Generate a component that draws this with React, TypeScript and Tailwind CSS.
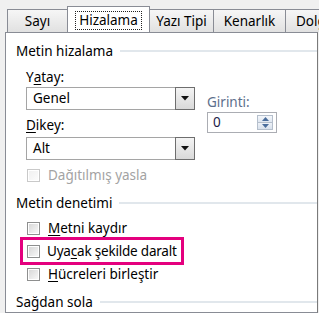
import React from "react";

const font = { fontFamily: '"Noto Sans", "Open Sans", sans-serif' };

function Tab({ label, w, active }: { label: string; w: string; active?: boolean }) {
  if (active) {
    return (
      <div
        className={`${w} h-[27px] -mb-px -ml-px relative z-10 bg-white border border-b-0 border-[#898c95] flex items-center justify-center shrink-0`}
      >
        <span className="border border-dotted border-[#222] px-[3px] leading-[17px] text-[13.5px] text-black">
          {label}
        </span>
      </div>
    );
  }
  return (
    <div
      className={`${w} h-[23px] -ml-px shrink-0 border border-b-0 border-[#898c95] bg-gradient-to-b from-[#f6f6f6] to-[#e1e1e1] flex items-center justify-center text-[13.5px] text-black pt-[1px] overflow-hidden whitespace-nowrap`}
    >
      {label}
    </div>
  );
}

function Header({ text }: { text: string }) {
  return (
    <div className="h-[16px] flex items-center gap-[7px] pl-[10px]">
      <span className="text-[13.5px] text-black whitespace-nowrap">{text}</span>
      <div className="flex-1 h-[2px] bg-[#e1e7ec]" />
    </div>
  );
}

function Check({ disabled }: { disabled?: boolean }) {
  return (
    <div
      className={`w-[13px] h-[13px] shrink-0 border p-px ${disabled ? "border-[#c9c9c9] bg-white" : "border-[#8e8f8f] bg-white"}`}
    >
      <div
        className={`w-full h-full bg-gradient-to-br ${disabled ? "from-[#f0f0f0] to-[#fbfbfb]" : "from-[#d8d8d8] to-[#f7f7f7]"}`}
      />
    </div>
  );
}

function Select({ value }: { value: string }) {
  return (
    <div className="h-[23px] w-[169px] border border-[#a5a5a5] flex items-stretch bg-white">
      <div className="flex-1 flex items-center pl-[6px] text-[13.5px] text-black">{value}</div>
      <div className="w-[20px] -my-px -mr-px border border-[#6e6e6e] bg-gradient-to-b from-[#f4f4f4] to-[#d9d9d9] flex items-center justify-center">
        <svg width="8" height="5" viewBox="0 0 8 5">
          <path d="M0 0h8L4 4.5z" fill="#111" />
        </svg>
      </div>
    </div>
  );
}

export default function App() {
  return (
    <div className="w-[319px] h-[313px] bg-[#f0f0f0] overflow-hidden" style={font}>
      {/* tabs */}
      <div className="h-[32px] flex items-end pl-[8px] overflow-hidden">
        <Tab label="Sayı" w="w-[61px]" />
        <Tab label="Hizalama" w="w-[83px]" active />
        <Tab label="Yazı Tipi" w="w-[65px]" />
        <Tab label="Kenarlık" w="w-[73px]" />
        <Tab label="Dolgu" w="w-[60px]" />
      </div>

      {/* panel */}
      <div className="ml-[5px] mr-[1px] h-[281px] border border-[#898c95] border-r-[#7a7a7a] bg-white text-[13.5px] text-black">
        <div className="mt-[10px]">
          <Header text="Metin hizalama" />
        </div>

        <div className="mt-[10px] pl-[20px] flex">
          <div className="w-[169px]">
            <div className="h-[16px] flex items-center">
              Y<u className="underline-offset-2">a</u>tay:
            </div>
            <div className="mt-[2px]">
              <Select value="Genel" />
            </div>
            <div className="h-[16px] mt-[7px] flex items-center">
              <u className="underline-offset-2">D</u>ikey:
            </div>
            <div className="mt-[4px]">
              <Select value="Alt" />
            </div>
          </div>

          <div className="ml-[12px] mt-[25px]">
            <div className="h-[16px] flex items-center text-[#5d6f8c]">Girinti:</div>
            <div className="mt-[2px] w-[70px] h-[21px] border border-[#abadb3] flex items-center justify-between pl-[5px] pr-[3px]">
              <span className="text-[#1c1c4a]">0</span>
              <div className="w-[16px] h-[15px] flex flex-col border border-[#b5bfcc]">
                <div className="flex-1 bg-gradient-to-b from-[#f4f7fb] to-[#dfe7f1] border-b border-[#b5bfcc] flex items-center justify-center">
                  <svg width="7" height="4" viewBox="0 0 7 4">
                    <path d="M3.5 0L7 4H0z" fill="#4a6d9c" />
                  </svg>
                </div>
                <div className="flex-1 bg-gradient-to-b from-[#eef2f8] to-[#d8e1ec] flex items-center justify-center">
                  <svg width="7" height="4" viewBox="0 0 7 4">
                    <path d="M0 0h7L3.5 4z" fill="#4a6d9c" />
                  </svg>
                </div>
              </div>
            </div>
          </div>
        </div>

        <div className="mt-[7px] h-[16px] pl-[21px] flex items-center gap-[8px] text-[#a3a3a3]">
          <Check disabled />
          <span>Dağıtılmış yasla</span>
        </div>

        <div className="mt-[12px]">
          <Header text="Metin denetimi" />
        </div>

        <div className="mt-[9px] h-[16px] pl-[21px] flex items-center gap-[8px]">
          <Check />
          <span>
            <u className="underline-offset-2">M</u>etni kaydır
          </span>
        </div>

        <div className="mt-[1px] ml-[14px] w-[164px] h-[28px] border-[3px] border-[#e4007e] pl-[4px] flex items-center gap-[7px] whitespace-nowrap">
          <Check />
          <span className="tracking-[-0.2px]">
            Uya<u className="underline-offset-2">c</u>ak şekilde daralt
          </span>
        </div>

        <div className="mt-[1px] h-[16px] pl-[21px] flex items-center gap-[8px]">
          <Check />
          <span>
            <u className="underline-offset-2">H</u>ücreleri birleştir
          </span>
        </div>

        <div className="mt-[12px]">
          <Header text="Sağdan sola" />
        </div>
      </div>
    </div>
  );
}
